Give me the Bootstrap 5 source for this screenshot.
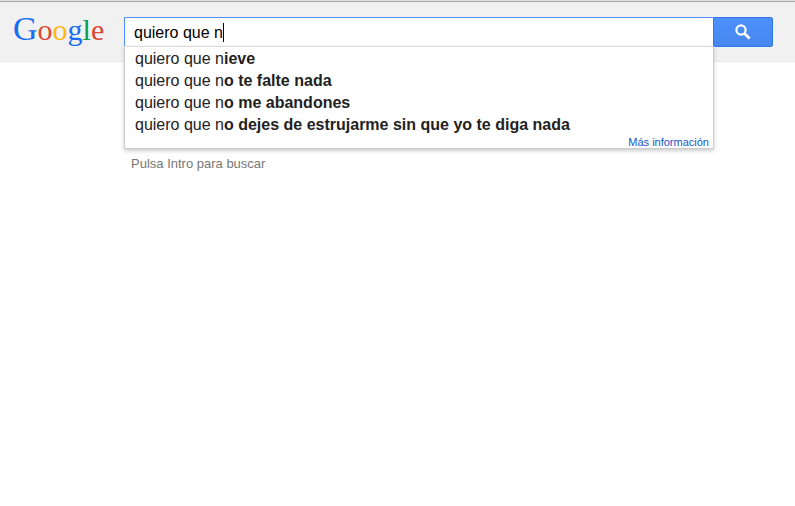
<!DOCTYPE html>
<html lang="es">
<head>
<meta charset="utf-8">
<meta name="viewport" content="width=device-width, initial-scale=1">
<title>quiero que n - Google</title>
<link href="https://cdn.jsdelivr.net/npm/bootstrap@5.3.0/dist/css/bootstrap.min.css" rel="stylesheet">
<style>
body { font-family: "Liberation Sans", Arial, sans-serif; color: #222; }
.top-bar { background: #f1f1f1; border-bottom: 1px solid #e5e5e5; height: 62px; }
.top-edge { height: 2px; background: #dcdcdc; border-bottom: 1px solid #a9a9a9; }
.logo { width: 124px; padding-left: 13px; padding-top: 7px; font: 30px/40px "Liberation Serif", "Times New Roman", serif; }
.logo-cap { font-size: 34px; }
.g-blue { color: #1a6cf0; }
.g-red { color: #dc4936; }
.g-yellow { color: #fcb80e; }
.g-green { color: #0a9d54; }
.search-form { padding-top: 15px; padding-right: 22px; }
.query { height: 30px; padding: 2px 9px 0; border: 1px solid #4d90fe; border-right: 0; font-size: 16px; color: #000; background: #fff; outline: 0; caret-color: transparent; }
.query-caret { left: 99px; top: 6px; width: 1px; height: 19px; background: #000; }
.search-btn { width: 60px; height: 30px; border: 1px solid #3079ed; border-radius: 0 2px 2px 0; background: linear-gradient(#4d90fe, #4787ed); }
.suggest { top: 29px; left: 0; right: -1px; padding-top: 1px; border: 1px solid #ccc; border-top-color: #d9d9d9; background: #fff; box-shadow: 0 2px 4px rgba(0, 0, 0, .2); z-index: 5; }
.suggest a { color: #222; font-size: 16px; line-height: 22px; padding: 0 10px; }
.suggest .more { color: #15c; font-size: 11px; line-height: 12px; padding: 0 4px; }
.hint { padding: 93px 0 0 131px; font-size: 13px; line-height: 18px; color: #777; }
</style>
<script src="https://cdn.jsdelivr.net/npm/bootstrap@5.3.0/dist/js/bootstrap.bundle.min.js"></script>
</head>
<body>
<header class="top-bar">
  <div class="top-edge"></div>
  <div class="d-flex">
    <a class="logo flex-shrink-0 text-decoration-none" href="#" aria-label="Google"><span class="g-blue logo-cap">G</span><span class="g-red">o</span><span class="g-yellow">o</span><span class="g-blue">g</span><span class="g-green">l</span><span class="g-red">e</span></a>
    <form class="search-form d-flex flex-grow-1" role="search">
      <div class="position-relative flex-grow-1">
        <input class="query d-block w-100 rounded-0" type="text" value="quiero que n" aria-label="Buscar" autocomplete="off">
        <span class="query-caret position-absolute"></span>
        <div class="suggest position-absolute">
          <ul class="list-unstyled mb-0">
            <li><a class="d-block text-decoration-none" href="#">quiero que n<b>ieve</b></a></li>
            <li><a class="d-block text-decoration-none" href="#">quiero que n<b>o te falte nada</b></a></li>
            <li><a class="d-block text-decoration-none" href="#">quiero que n<b>o me abandones</b></a></li>
            <li><a class="d-block text-decoration-none" href="#">quiero que n<b>o dejes de estrujarme sin que yo te diga nada</b></a></li>
          </ul>
          <a class="more d-block text-end text-decoration-none" href="#">Más información</a>
        </div>
      </div>
      <button class="search-btn d-flex align-items-center justify-content-center p-0" type="submit" aria-label="Buscar">
        <svg width="16" height="16" viewBox="0 0 16 16" fill="none" stroke="#fff"><circle cx="6" cy="6" r="4.6" stroke-width="2.2"/><path d="M9.5 9.5L14.6 14.6" stroke-width="2.8"/></svg>
      </button>
    </form>
  </div>
</header>
<main>
  <p class="hint mb-0">Pulsa Intro para buscar</p>
</main>
</body>
</html>
